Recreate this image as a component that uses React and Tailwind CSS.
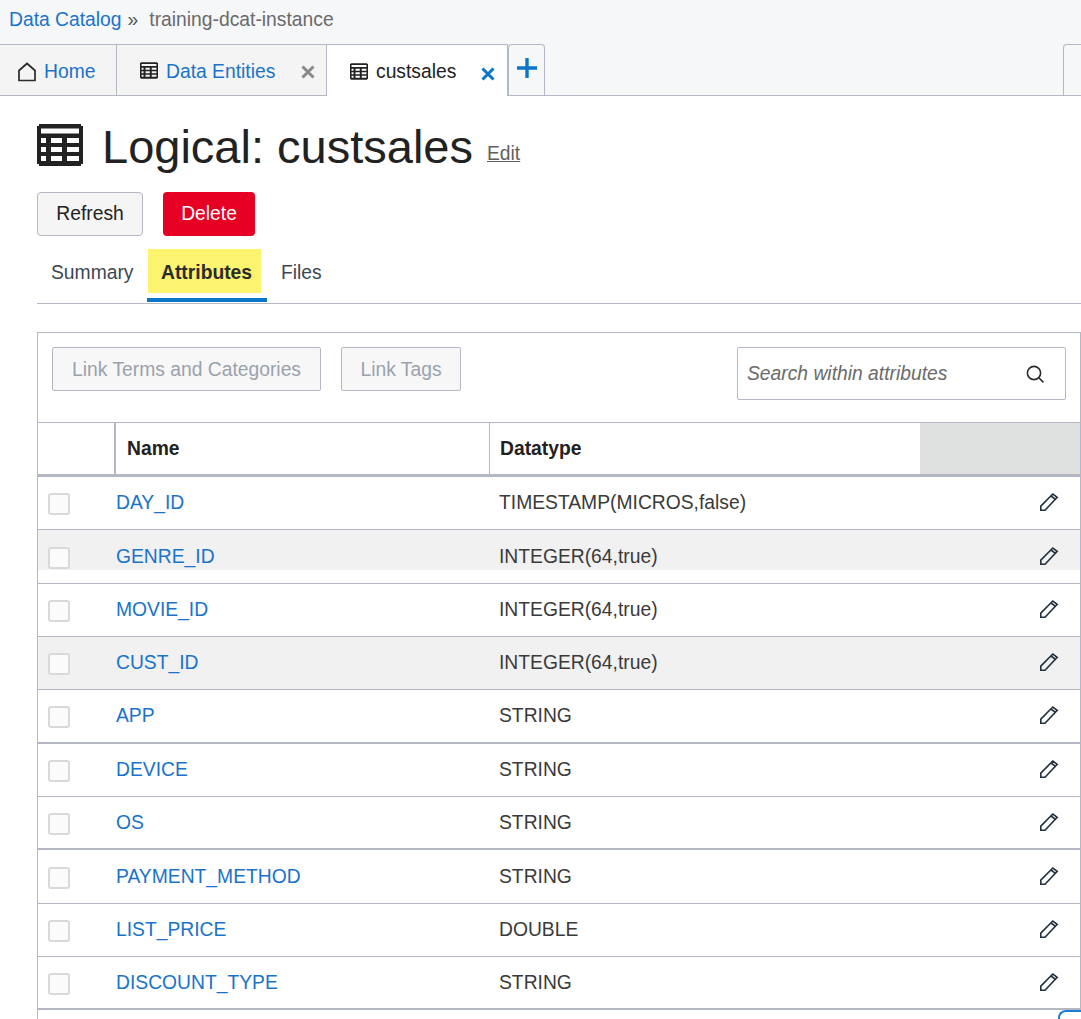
import React from 'react';

const rows = [
    { name: 'DAY_ID', type: 'TIMESTAMP(MICROS,false)' },
    { name: 'GENRE_ID', type: 'INTEGER(64,true)', band: 'partial' },
    { name: 'MOVIE_ID', type: 'INTEGER(64,true)' },
    { name: 'CUST_ID', type: 'INTEGER(64,true)', band: 'full' },
    { name: 'APP', type: 'STRING', thick: true },
    { name: 'DEVICE', type: 'STRING' },
    { name: 'OS', type: 'STRING', thick: true },
    { name: 'PAYMENT_METHOD', type: 'STRING' },
    { name: 'LIST_PRICE', type: 'DOUBLE' },
    { name: 'DISCOUNT_TYPE', type: 'STRING', thick: true },
];

const TableIcon = ({ className }) => (
    <svg viewBox="0 0 46 42" className={className} fill="currentColor">
        <path fillRule="evenodd" d="M2 0h42v2h2v38h-2v2H2v-2H0V2h2zM4 4.500v5h38v-5zM4 14v5h5v-5zM14 14v5h11v-5zM30 14v5h12v-5zM4 23v5h5v-5zM14 23v5h11v-5zM30 23v5h12v-5zM4 32v5h5v-5zM14 32v5h11v-5zM30 32v5h12v-5z" />
    </svg>
);

const HomeIcon = () => (
    <svg viewBox="0 0 20 20" className="w-[20px] h-[20px]" fill="none" stroke="#2b2b2b" strokeWidth="1.7">
        <path d="M2 8.500 10 1.500l8 7V18.500H2z" />
    </svg>
);

const CloseIcon = ({ className }) => (
    <svg viewBox="0 0 14 14" className={className} fill="none" stroke="currentColor" strokeWidth="3">
        <path d="M1.500 1.500l11 11M12.500 1.500l-11 11" />
    </svg>
);

const PencilIcon = () => (
    <svg viewBox="0 0 20 20" className="w-[20px] h-[20px]" fill="none" stroke="#23303f" strokeWidth="1.600">
        <path d="M1.800 18.200v-4L13.800 2l4.400 3.300L6 18.200z" />
        <path d="M12 4l4.400 3.300" />
    </svg>
);

const SearchIcon = () => (
    <svg viewBox="0 0 20 20" className="w-[20px] h-[20px]" fill="none" stroke="#2b2b2b" strokeWidth="1.600">
        <circle cx="9" cy="9" r="6.600" />
        <path d="M13.800 13.800l4.600 4.600" />
    </svg>
);

const AttributeRow = ({ row }) => (
    <div className={`relative flex h-[53.35px] shrink-0 border-[#b3b8c4] text-[19.3px] ${row.thick ? 'border-b-2' : 'border-b'}`}>
        {row.band && (
            <div className={`absolute inset-x-0 top-0 bg-[#f1f1f1] ${row.band === 'partial' ? 'h-[40px]' : 'h-full'}`} />
        )}
        <div className="relative flex w-[78px] shrink-0 items-center pl-[10px] pt-[2px]">
            <span className="block w-[22px] h-[22px] rounded-[3px] border-2 border-[#d9d9d9] bg-[#fbfbfb]" />
        </div>
        <div className="relative flex w-[383px] shrink-0 items-center text-[#1a73c9] pt-[1px]">{row.name}</div>
        <div className="relative flex flex-1 items-center text-[#3a3a3a] pt-[1px]">{row.type}</div>
        <div className="relative flex w-[41px] shrink-0 items-center pb-[2px]"><PencilIcon /></div>
    </div>
);

export default function App() {
    return (
        <div className="relative h-[1019px] w-[1081px] overflow-hidden bg-white font-['Liberation_Sans',Arial,sans-serif] text-[#222]">
            <div className="h-[96px] bg-[#f6f7f9] flex flex-col">
                <div className="h-[44px] flex items-center pl-[9px] pb-[4px] text-[19.3px]">
                    <span className="text-[#1a73c9]">Data Catalog</span>
                    <span className="ml-[6px] text-[#555]">»</span>
                    <span className="ml-[11px] text-[#6a6a6a]">training-dcat-instance</span>
                </div>
                <div className="h-[52px] flex border-b border-[#b3b8c4] text-[19.3px]">
                    <div className="w-[117px] flex items-center gap-[7px] pl-[17px] pt-[4px] bg-[#f5f4f4] border-r border-t border-[#b3b8c4] -mb-px border-b">
                        <HomeIcon />
                        <span className="text-[#1a73c9]">Home</span>
                    </div>
                    <div className="w-[210px] flex items-center pl-[23px] pt-[4px] bg-[#f5f4f4] border-r border-t border-b -mb-px border-[#b3b8c4]">
                        <TableIcon className="w-[18px] h-[17px] text-[#222] -mt-[3px]" />
                        <span className="ml-[8px] text-[#1a73c9]">Data Entities</span>
                        <CloseIcon className="ml-[26px] w-[14px] h-[14px] text-[#8a8a8a]" />
                    </div>
                    <div className="w-[181px] flex items-center pl-[23px] pt-[4px] bg-white border-r border-t -mb-px border-[#b3b8c4]">
                        <TableIcon className="w-[18px] h-[17px] text-[#222] -mt-[3px]" />
                        <span className="ml-[8px] text-[#222]">custsales</span>
                        <CloseIcon className="ml-[25px] mt-[2px] w-[14px] h-[14px] text-[#0b76c8]" />
                    </div>
                    <div className="w-[37px] flex items-center justify-center border-x border-t border-[#b3b8c4] rounded-t-[4px] pb-[4px]">
                        <svg viewBox="0 0 22 22" className="w-[22px] h-[22px]" fill="none" stroke="#0b76c8" strokeWidth="3.400">
                            <path d="M11 1v20M1 11h20" />
                        </svg>
                    </div>
                    <div className="ml-auto w-[18px] border-l border-t border-[#b3b8c4] rounded-tl-[4px]" />
                </div>
            </div>

            <div className="pl-[37px]">
                <div className="flex items-center h-[96px] pt-[4px]">
                    <TableIcon className="w-[46px] h-[42px] text-[#222] -mt-[2px]" />
                    <h1 className="ml-[19px] text-[47px] leading-none text-[#222]">Logical: custsales</h1>
                    <a className="ml-[14px] mt-[16px] text-[19.3px] text-[#5f5f5f] underline">Edit</a>
                </div>

                <div className="flex gap-[20px] h-[44px]">
                    <button className="w-[106px] h-[44px] rounded-[4px] border border-[#b3b8c4] bg-[#f5f5f5] text-[19.3px] text-[#222]">Refresh</button>
                    <button className="w-[92px] h-[44px] rounded-[4px] bg-[#e60023] text-[19.3px] text-white">Delete</button>
                </div>

                <div className="relative flex h-[55px] mt-[13px] border-b border-[#b3b8c4] text-[19.3px]">
                    <div className="pl-[14px] w-[110px] h-[48px] flex items-center text-[#3d4753]">Summary</div>
                    <div className="relative w-[120px]">
                        <div className="ml-[1px] w-[113px] h-[44px] flex items-center pl-[13px] bg-[#fcf36f] font-bold text-[#2b2b2b] pt-[4px]">Attributes</div>
                        <div className="absolute left-0 right-0 bottom-px h-[4px] bg-[#0b76c8]" />
                    </div>
                    <div className="pl-[14px] h-[48px] flex items-center text-[#3d4753]">Files</div>
                </div>

                <div className="mt-[28px] border-x border-t border-[#b3b8c4] relative">
                    <div className="flex items-start h-[89px] pt-[14px] pl-[14px] pr-[14px] text-[19.3px]">
                        <button className="w-[269px] h-[44px] pt-[2px] rounded-[2px] border border-[#b3b8c4] bg-[#f7f7f7] text-[#9aa2ad]">Link Terms and Categories</button>
                        <button className="ml-[20px] w-[120px] h-[44px] pt-[2px] rounded-[2px] border border-[#b3b8c4] bg-[#f7f7f7] text-[#9aa2ad]">Link Tags</button>
                        <div className="ml-auto w-[329px] h-[53px] flex items-center rounded-[2px] border border-[#b3b8c4] pl-[9px] pr-[20px]">
                            <span className="italic text-[#6b6b6b] flex-1 pt-[2px]">Search within attributes</span>
                            <SearchIcon />
                        </div>
                    </div>
                    <div className="flex h-[55px] border-y border-[#b3b8c4] border-b-[3px] text-[19.3px] font-bold text-[#222]">
                        <div className="w-[78px] border-r-2 border-[#b3b8c4]" />
                        <div className="w-[374px] border-r border-[#b3b8c4] pl-[11px] pt-[2px] flex items-center">Name</div>
                        <div className="w-[430px] pl-[10px] pt-[2px] flex items-center">Datatype</div>
                        <div className="flex-1 bg-[#dfe0e0]" />
                    </div>
                    <div className="flex flex-col">
                        {rows.map((row) => <AttributeRow key={row.name} row={row} />)}
                        <div className="h-[20px]" />
                    </div>
                </div>
            </div>
            <div className="absolute right-0 top-[1010px] w-[23px] h-[20px] bg-white border-2 border-[#1a7fd0] rounded-tl-[8px] border-r-0 border-b-0" />
        </div>
    );
}
